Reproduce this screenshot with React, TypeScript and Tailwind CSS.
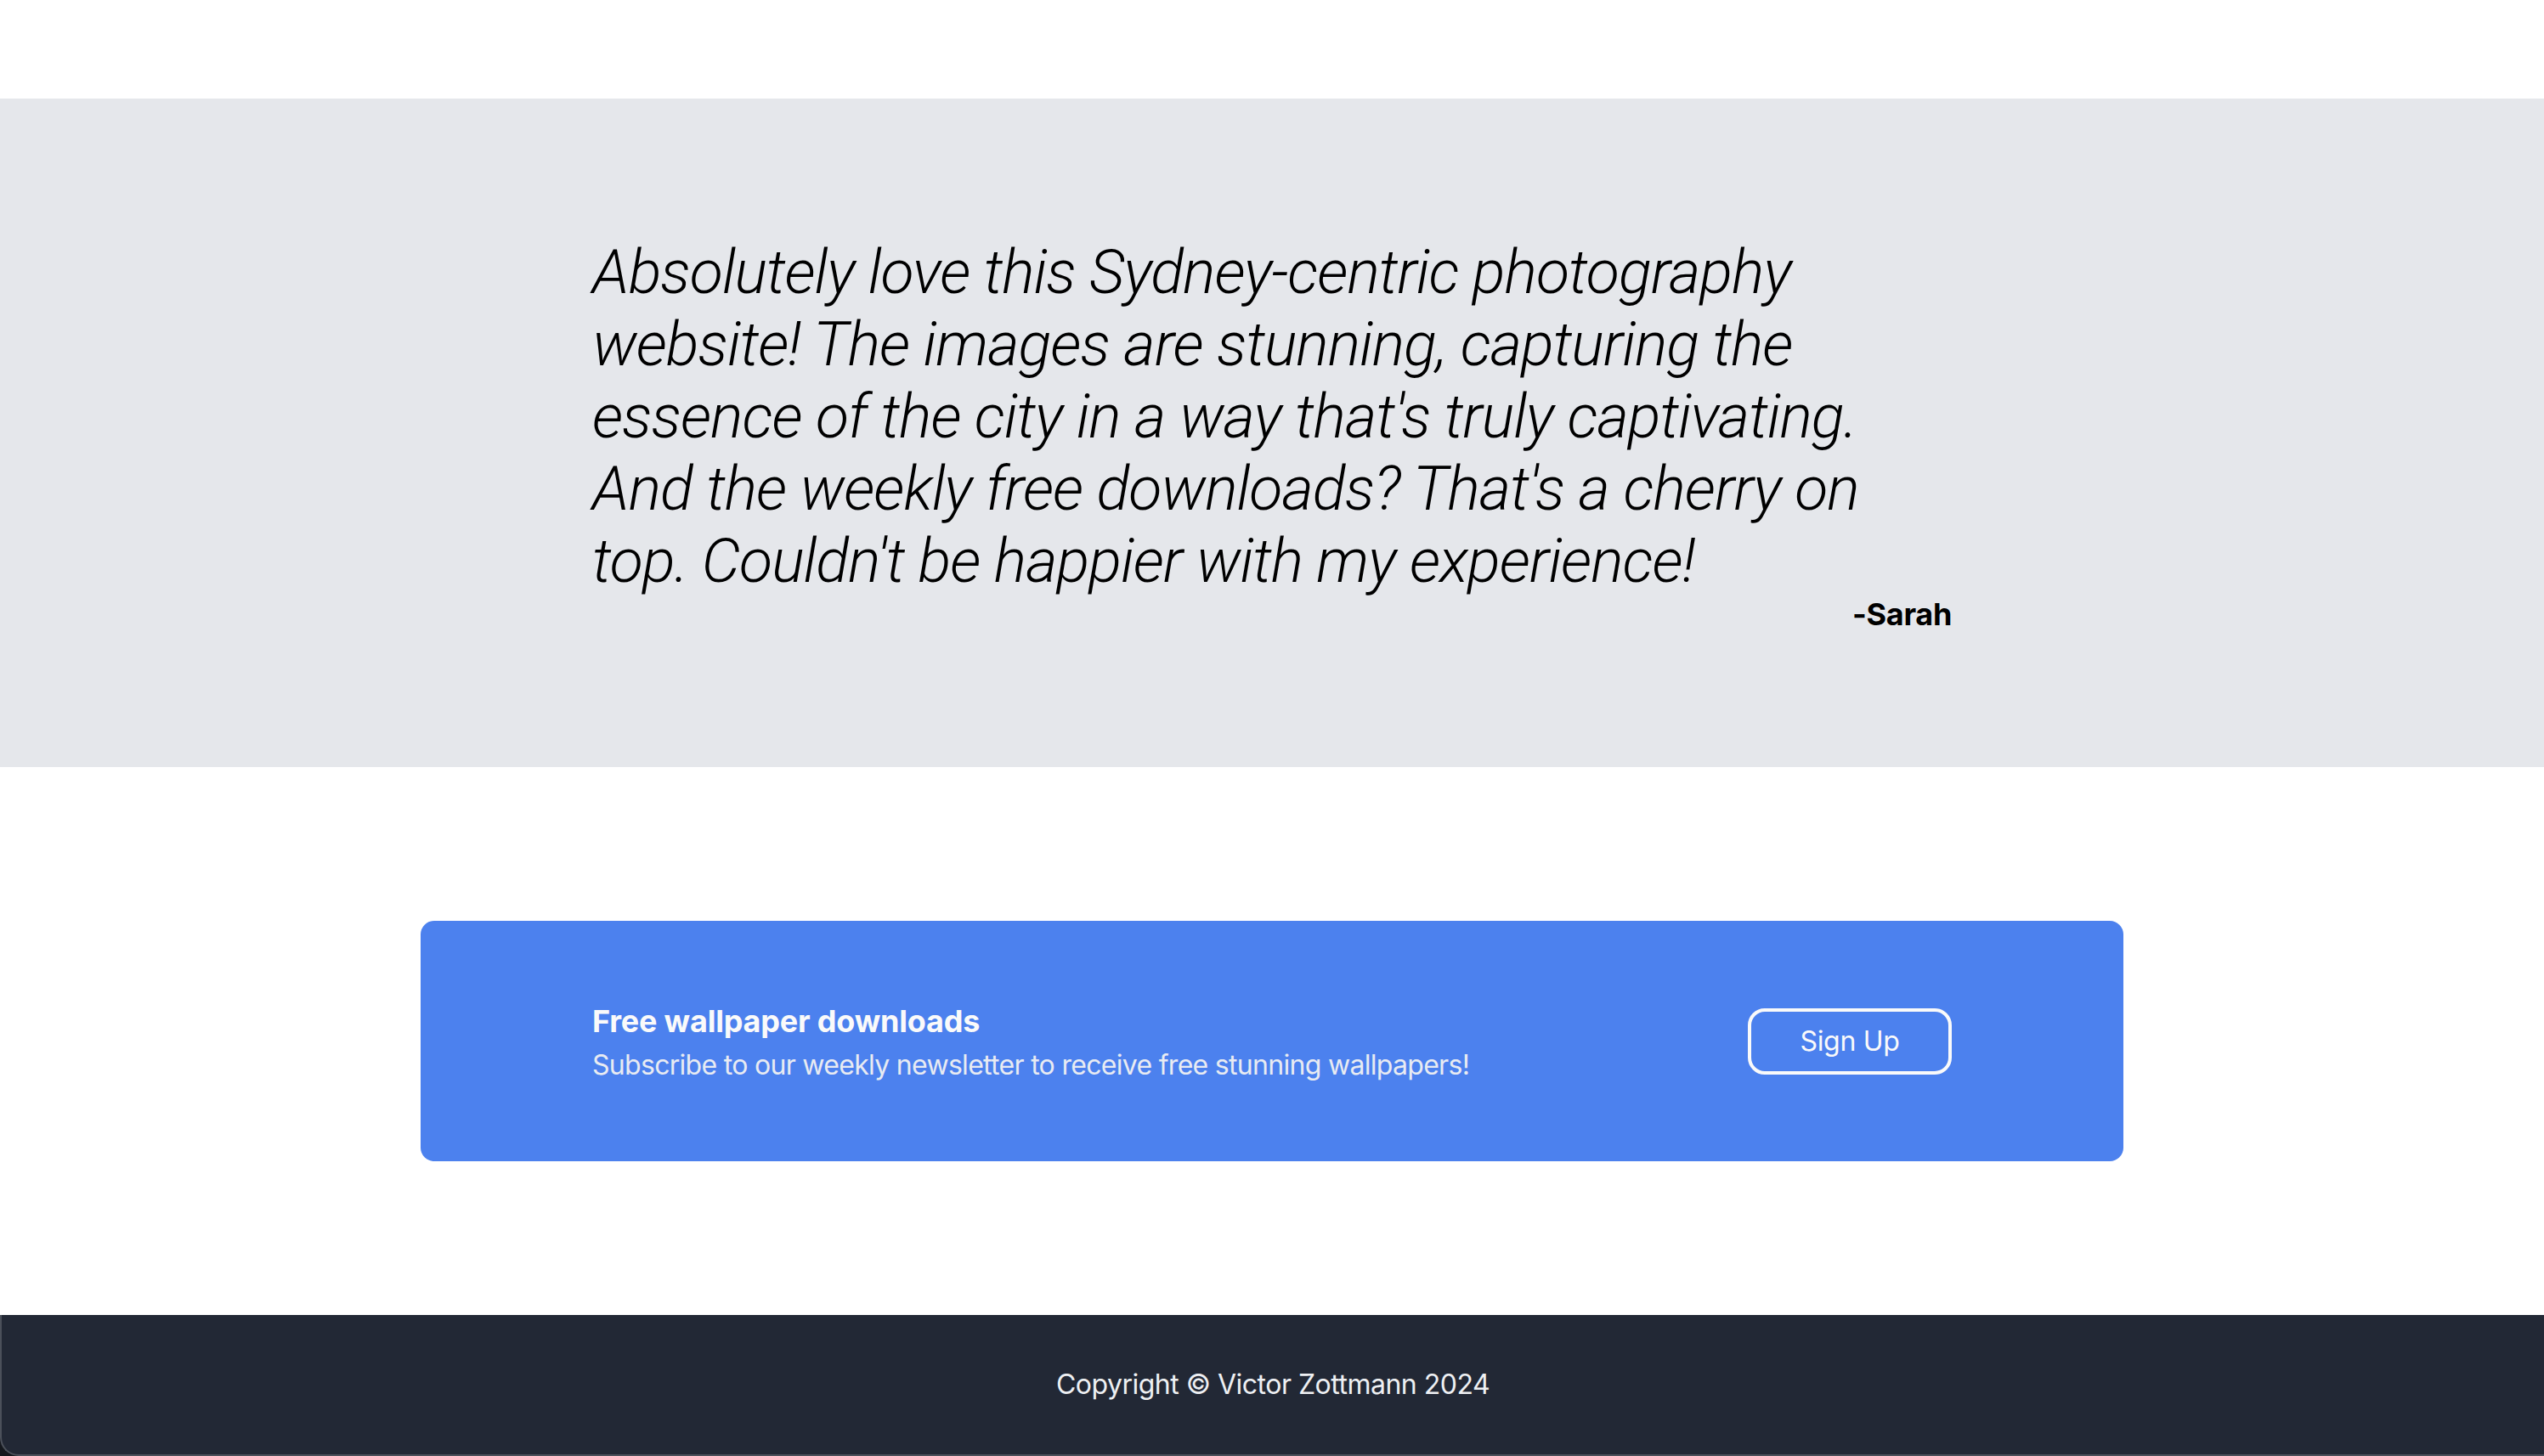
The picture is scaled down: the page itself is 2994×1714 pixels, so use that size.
import React from "react";

export default function App() {
  return (
    <div className="min-h-screen bg-white flex flex-col font-[Inter,sans-serif]">
      <div className="h-[116px] shrink-0" />
      <section className="bg-[#e5e7eb] h-[787px] pt-[162px] shrink-0">
        <div className="w-[1600px] mx-auto">
          <p className="font-[Roboto,sans-serif] italic font-light text-[72px] leading-[85px] tracking-[-1px] text-black whitespace-nowrap">
            Absolutely love this Sydney-centric photography
            <br />
            website! The images are stunning, capturing the
            <br />
            essence of the city in a way that's truly captivating.
            <br />
            And the weekly free downloads? That's a cherry on
            <br />
            top. Couldn't be happier with my experience!
          </p>
          <p className="-mt-[8px] text-right font-bold text-[36px] leading-[56px] tracking-[-0.3px] text-black">
            -Sarah
          </p>
        </div>
      </section>
      <div className="py-[181px] shrink-0">
        <div className="w-[2004px] h-[283px] mx-auto bg-[#4c81ee] rounded-[16px] flex items-center">
          <div className="w-[1600px] mx-auto flex items-center justify-between">
            <div className="flex flex-col">
              <h2 className="text-[36px] leading-[56px] font-bold tracking-[-0.2px] text-[#fafafa]">
                Free wallpaper downloads
              </h2>
              <p className="text-[32px] leading-[48px] tracking-[-0.7px] text-[#e8ebf2]">
                Subscribe to our weekly newsletter to receive free stunning wallpapers!
              </p>
            </div>
            <button className="w-[240px] h-[78px] border-[4px] border-[#fafafa] rounded-[20px] text-[32px] leading-[48px] tracking-[-0.3px] text-[#fafafa] flex items-center justify-center">
              Sign Up
            </button>
          </div>
        </div>
      </div>
      <div className="bg-[#15181e] shrink-0">
        <footer className="h-[166px] bg-[#222835] border-l-2 border-b-2 border-[#4b505a] rounded-bl-[22px] flex items-center justify-center">
          <p className="text-[32px] leading-[48px] tracking-[-0.5px] text-[#eef0f3]">
            Copyright © Victor Zottmann 2024
          </p>
        </footer>
      </div>
    </div>
  );
}
